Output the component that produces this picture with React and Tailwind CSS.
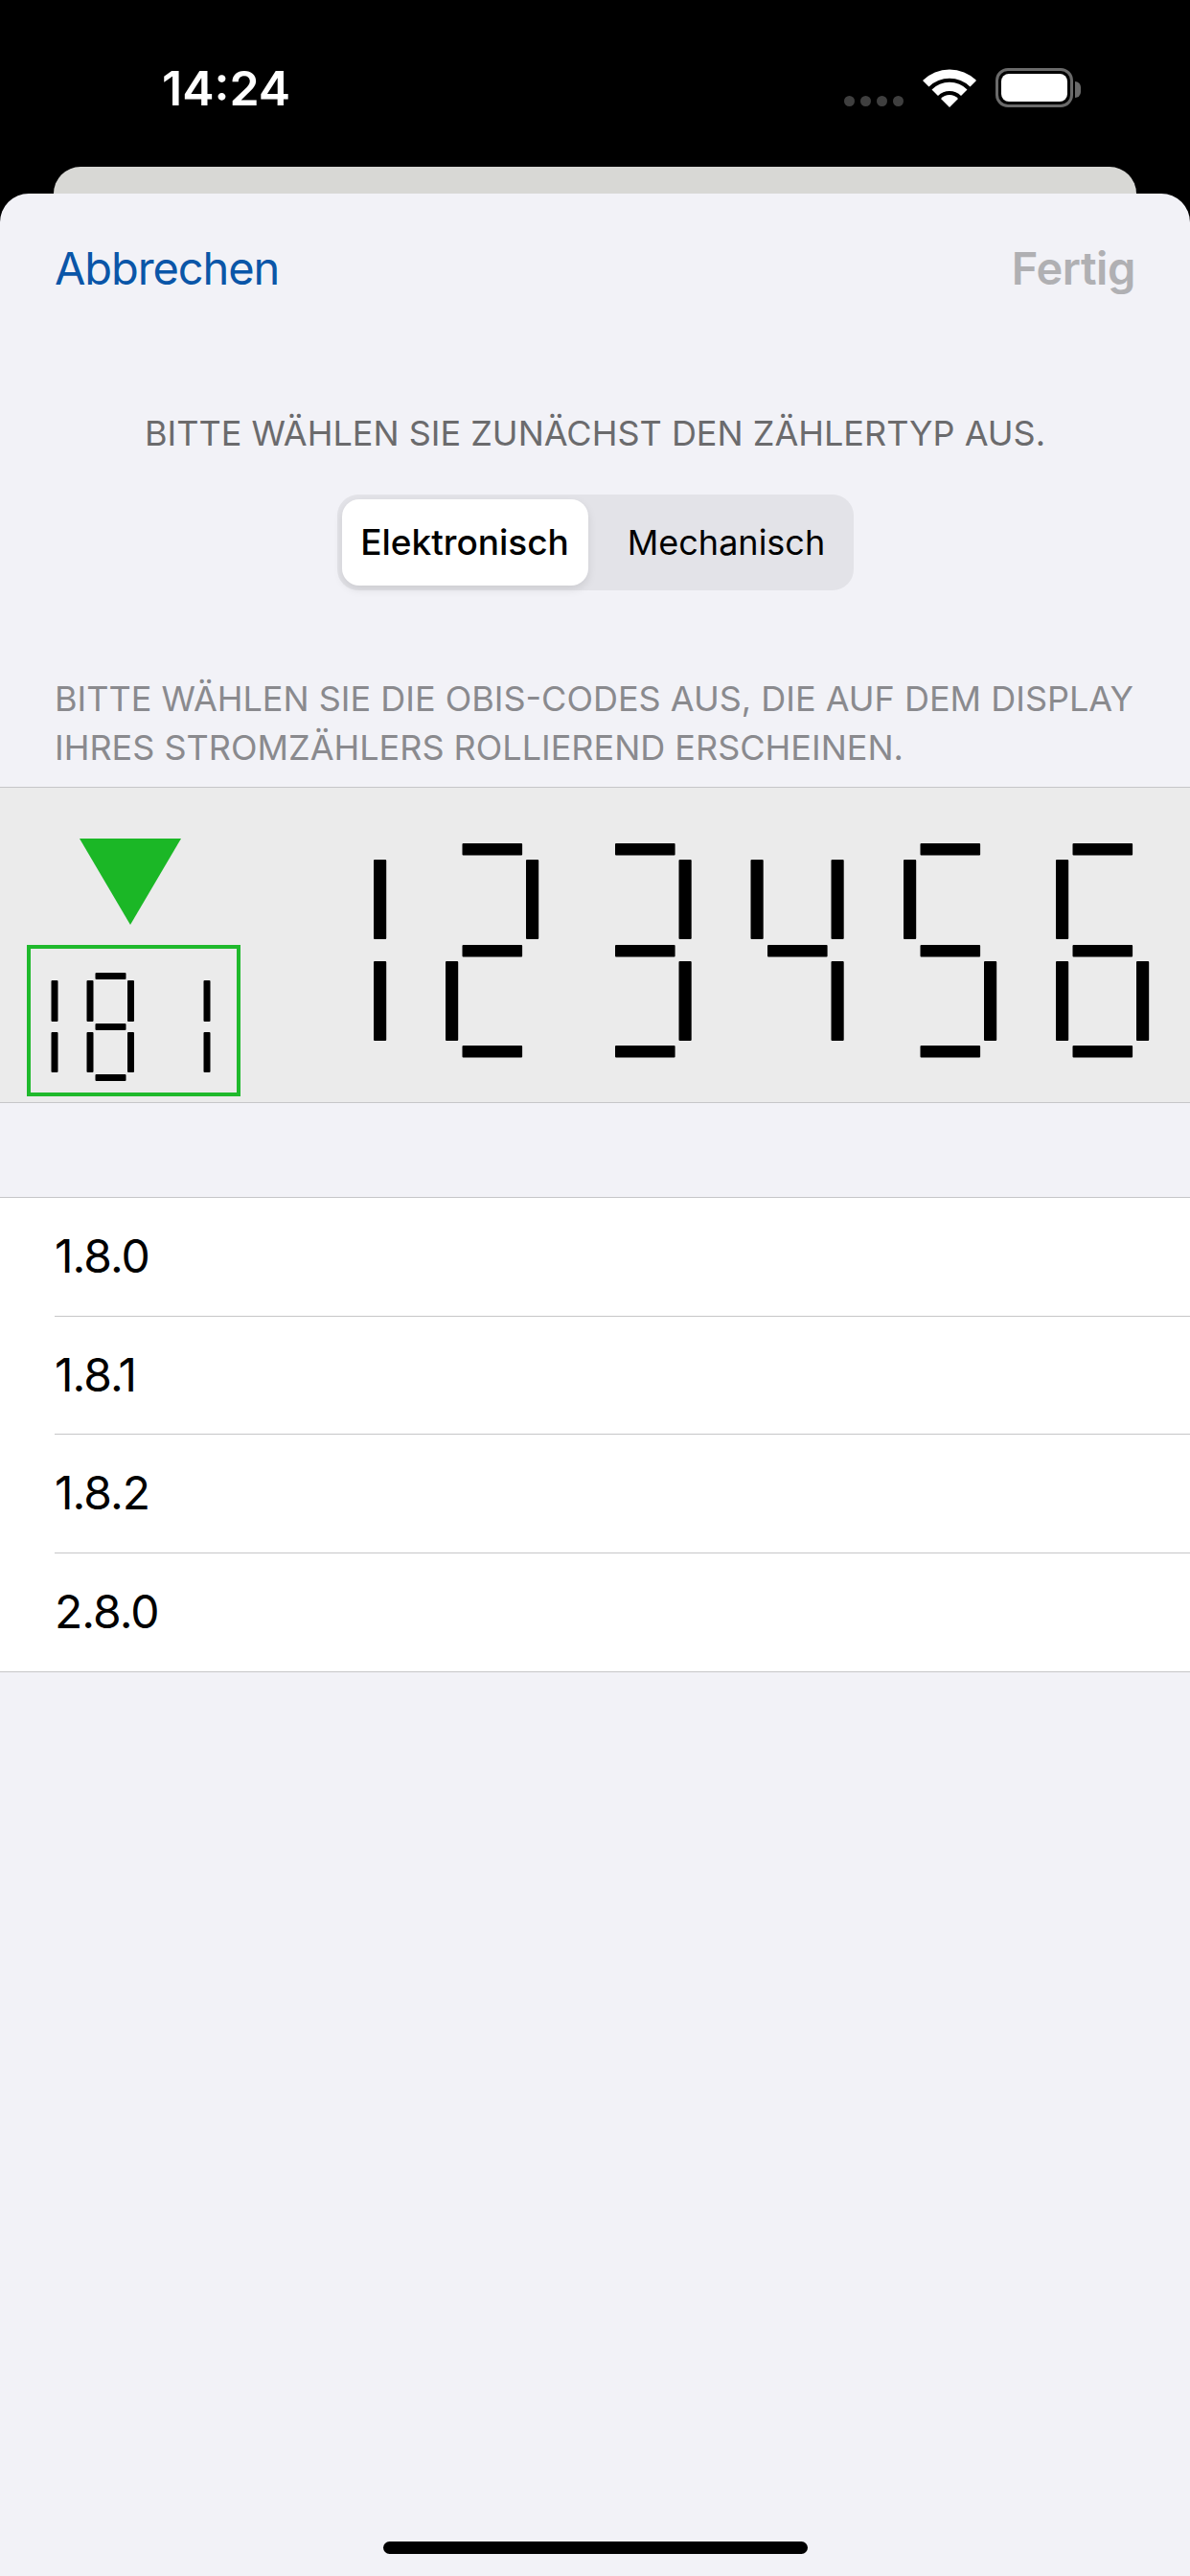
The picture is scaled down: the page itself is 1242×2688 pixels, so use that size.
const SANS = "font-['Inter','Liberation_Sans',sans-serif]";

function Bar({ x, y, w, h, r = 1 }) {
  return <rect x={x} y={y} width={w} height={h} rx={r} fill="#000" />;
}

// segments: a top, b upper right, c lower right, d bottom, e lower left, f upper left, g middle
const DIGITS = {
  1: "bc",
  2: "abdeg",
  3: "abcdg",
  4: "bcfg",
  5: "acdfg",
  6: "acdefg",
  8: "abcdefg",
};

function Digit({ n, ox, big }) {
  const m = big
    ? { L: 0, R: 84, vw: 13.2, hx: 17.5, hw: 62.6, hh: 12.6, t: -11, g: 95, bt: 200, u: 6, uh: 83, l: 112, lh: 83 }
    : { L: 0, R: 42.5, vw: 7, hx: 9, hw: 32, hh: 7, t: -8, g: 45, bt: 98, u: 0, uh: 43, l: 54, lh: 42 };
  const s = DIGITS[n];
  return (
    <g transform={`translate(${ox} 0)`}>
      {s.includes("a") && <Bar x={m.hx} y={m.t} w={m.hw} h={m.hh} />}
      {s.includes("g") && <Bar x={m.hx} y={m.g} w={m.hw} h={m.hh} />}
      {s.includes("d") && <Bar x={m.hx} y={m.bt} w={m.hw} h={m.hh} />}
      {s.includes("f") && <Bar x={m.L} y={m.u} w={m.vw} h={m.uh} />}
      {s.includes("b") && <Bar x={m.R} y={m.u} w={m.vw} h={m.uh} />}
      {s.includes("e") && <Bar x={m.L} y={m.l} w={m.vw} h={m.lh} />}
      {s.includes("c") && <Bar x={m.R} y={m.l} w={m.vw} h={m.lh} />}
    </g>
  );
}

function StatusBar() {
  return (
    <div className="flex h-[174px] shrink-0 items-start justify-between bg-black pl-[169px] pr-[122px] pt-[63px]">
      <span className={`text-[50px] leading-[58px] font-semibold text-white ${SANS}`}>14:24</span>
      <div className="mt-[7px] flex items-center">
        <div className="mt-[28px] mr-[20px] flex gap-[6px]">
          <div className="h-[11px] w-[11px] rounded-full bg-[#3f3f3f]" />
          <div className="h-[11px] w-[11px] rounded-full bg-[#3f3f3f]" />
          <div className="h-[11px] w-[11px] rounded-full bg-[#3f3f3f]" />
          <div className="h-[11px] w-[11px] rounded-full bg-[#3f3f3f]" />
        </div>
        <svg width="56" height="42" viewBox="0 0 56 42" className="mr-[20px]">
          <path d="M0 14 A40 40 0 0 1 56 14 L49.5 20.5 A31 31 0 0 0 6.5 20.5 Z" fill="#fff" />
          <path d="M9.5 23.5 A26 26 0 0 1 46.5 23.5 L40 30 A17 17 0 0 0 16 30 Z" fill="#fff" />
          <path d="M19 33 A12 12 0 0 1 37 33 L28 42 Z" fill="#fff" />
        </svg>
        <div className="relative h-[41px] w-[81px] rounded-[13px] border-[3px] border-[#6a6a6a] p-[3px]">
          <div className="h-full w-full rounded-[8px] bg-white" />
          <div className="absolute top-[11px] -right-[11px] h-[17px] w-[6px] rounded-r-full bg-[#6a6a6a]" />
        </div>
      </div>
    </div>
  );
}

function Row({ label, last }) {
  return (
    <div className="pl-[57px]">
      <div className={`flex h-[123.5px] items-center text-[48px] tracking-[-1px] text-black ${SANS} ${last ? "" : "border-b border-[#c6c6c8]"}`}>
        {label}
      </div>
    </div>
  );
}

export default function App() {
  return (
    <div className="flex h-[2688px] w-[1242px] flex-col overflow-hidden bg-black">
      <StatusBar />
      <div className="mx-[56px] h-[28px] shrink-0 rounded-t-[30px] bg-[#d8d8d5]" />
      <div className={`relative flex flex-1 flex-col rounded-t-[30px] bg-[#f2f2f7] ${SANS}`}>
        <div className="flex h-[157px] items-center justify-between px-[57px] text-[47px]">
          <span className="tracking-[-1.1px] text-[#0a56a8]">Abbrechen</span>
          <span className="font-semibold tracking-[-0.4px] text-[#b0b0b3]">Fertig</span>
        </div>
        <p className="mt-[70px] text-center text-[36px] leading-[46px] text-[#6b6b6d]">
          BITTE WÄHLEN SIE ZUNÄCHST DEN ZÄHLERTYP AUS.
        </p>
        <div className="mx-auto mt-[41px] flex h-[100px] w-[539px] rounded-[22px] bg-[#e3e3e8] p-[5px] text-[36px]">
          <div className="flex w-[257px] items-center justify-center rounded-[18px] bg-white text-[37px] font-medium text-black shadow-[0_4px_10px_rgba(0,0,0,0.1)]">
            Elektronisch
          </div>
          <div className="flex flex-1 items-center justify-center pl-[17px] text-black">Mechanisch</div>
        </div>
        <p className="mt-[88px] px-[57px] text-[36px] leading-[51px] text-[#8a8a8e]">
          BITTE WÄHLEN SIE DIE OBIS-CODES AUS, DIE AUF DEM DISPLAY IHRES STROMZÄHLERS ROLLIEREND ERSCHEINEN.
        </p>
        <div className="mt-[15px] h-[330px] border-y border-[#c6c6c8] bg-[#ebebeb]">
          <svg width="1242" height="328" viewBox="0 822 1242 328" className="block">
            <polygon points="83,875 189,875 136,965" fill="#1bb726" />
            <rect x="30" y="988" width="219" height="154" fill="none" stroke="#1fb92c" strokeWidth="4" />
            <g transform="translate(0 1023)">
              <Digit n={1} ox={11} />
              <Digit n={8} ox={90.5} />
              <Digit n={1} ox={170} />
            </g>
            <g transform="translate(0 891)">
              <Digit n={1} ox={306} big />
              <Digit n={2} ox={465} big />
              <Digit n={3} ox={624.5} big />
              <Digit n={4} ox={783.5} big />
              <Digit n={5} ox={943} big />
              <Digit n={6} ox={1102} big />
            </g>
          </svg>
        </div>
        <div className="mt-[98px] border-y border-[#c6c6c8] bg-white">
          <Row label="1.8.0" />
          <Row label="1.8.1" />
          <Row label="1.8.2" />
          <Row label="2.8.0" last />
        </div>
        <div className="absolute bottom-[23px] left-[400px] h-[13px] w-[443px] rounded-full bg-black" />
      </div>
    </div>
  );
}
